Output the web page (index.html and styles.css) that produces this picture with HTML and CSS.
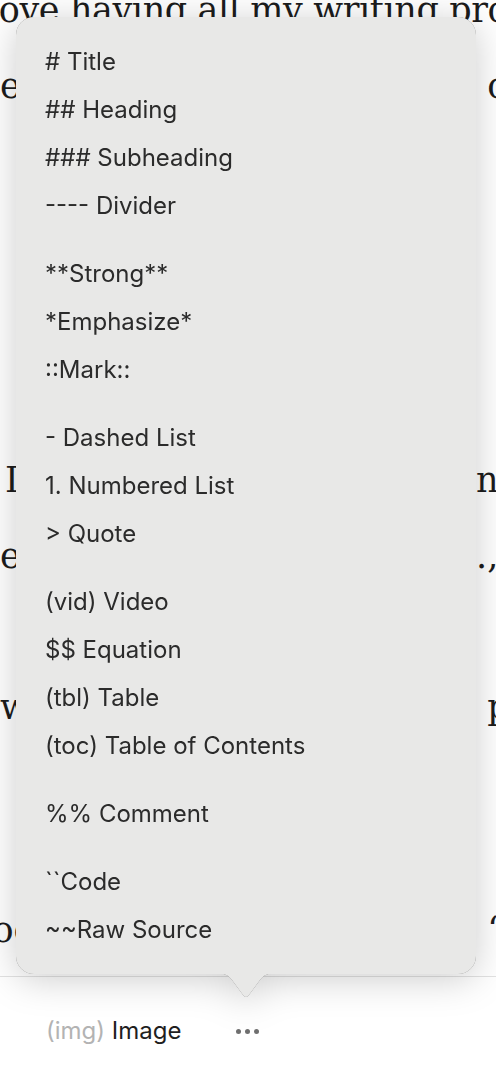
FILE: index.html
```html
<!DOCTYPE html>
<html lang="en">
<head>
<meta charset="utf-8">
<title>Insert menu</title>
<link rel="stylesheet" href="styles.css">
</head>
<body>
<div class="screen">
  <main class="article">
    <div class="lines">
      <div class="ln"><span class="frag frag-first">love having all my writing projects</span></div>
      <div class="ln"><span class="frag">e</span><span class="frag-r">&nbsp;co</span></div>
      <div class="ln gap-lg"><span class="frag frag-i">I</span><span class="frag-r">ne</span></div>
      <div class="ln"><span class="frag">e</span><span class="frag-r">.,</span></div>
      <div class="ln gap-sm"><span class="frag">w</span><span class="frag-r">&nbsp;p</span></div>
      <div class="ln gap-md"><span class="frag frag-cut">boc</span><span class="frag-r">&nbsp;‘</span></div>
    </div>
  </main>

  <footer class="toolbar">
    <span class="tb-item"><span class="tb-code">(img)</span> Image</span>
    <span class="more" aria-label="More"><i></i><i></i><i></i></span>
  </footer>

  <div class="popover">
    <div class="menu">
      <div class="group">
        <div class="item"># Title</div>
        <div class="item">## Heading</div>
        <div class="item">### Subheading</div>
        <div class="item">---- Divider</div>
      </div>
      <div class="group">
        <div class="item">**Strong**</div>
        <div class="item">*Emphasize*</div>
        <div class="item">::Mark::</div>
      </div>
      <div class="group">
        <div class="item">- Dashed List</div>
        <div class="item">1. Numbered List</div>
        <div class="item">&gt; Quote</div>
      </div>
      <div class="group">
        <div class="item">(vid) Video</div>
        <div class="item">$$ Equation</div>
        <div class="item">(tbl) Table</div>
        <div class="item">(toc) Table of Contents</div>
      </div>
      <div class="group">
        <div class="item">%% Comment</div>
      </div>
      <div class="group">
        <div class="item">``Code</div>
        <div class="item">~~Raw Source</div>
      </div>
    </div>
    <svg class="arrow" width="60" height="26" viewBox="0 0 60 26" aria-hidden="true">
      <path d="M0 0 C8 0 12 2 16 7 L27 22 Q30 26 33 22 L44 7 C48 2 52 0 60 0 Z" fill="#e8e8e7"/>
    </svg>
  </div>
</div>
</body>
</html>
```

FILE: styles.css
```css
* { box-sizing: border-box; }

html, body {
  margin: 0;
  padding: 0;
  background: #ffffff;
}

.screen {
  position: relative;
  width: 496px;
  height: 1070px;
  overflow: hidden;
  background: #ffffff;
}

/* background document */
.article {
  height: 977px;
  overflow: hidden;
  border-bottom: 1px solid #e2e2e2;
}

.lines {
  margin-top: -28px;
  font-family: "DejaVu Serif", serif;
  font-size: 35px;
  line-height: 76px;
  color: #1c1c1c;
}

.ln {
  display: flex;
  height: 76px;
  white-space: nowrap;
  overflow: hidden;
}

.frag { flex: none; }
.frag-first { margin-left: -12px; letter-spacing: -0.4px; word-spacing: 0; }
.frag-cut { margin-left: -30px; }
.frag-i { margin-left: 5px; }

.frag-r {
  flex: none;
  margin-left: auto;
  width: 20px;
  overflow: visible;
}

.gap-lg { margin-top: 318px; }
.gap-sm { margin-top: 75px; }
.gap-md { margin-top: 147px; }

/* bottom toolbar */
.toolbar {
  display: flex;
  align-items: center;
  gap: 55px;
  height: 93px;
  padding: 13px 0 0 46px;
  font-family: Inter, "Noto Sans", sans-serif;
  font-size: 24px;
  color: #1f1f1f;
}

.tb-code { color: #b3b3b3; }

.more {
  display: flex;
  gap: 4px;
  padding-top: 2px;
}

.more i {
  display: block;
  width: 5px;
  height: 5px;
  border-radius: 50%;
  background: #6f6f6f;
}

/* popover menu */
.popover {
  position: absolute;
  left: 16px;
  top: 17px;
  width: 460px;
  filter: drop-shadow(0 0 0.7px rgba(0, 0, 0, 0.5)) drop-shadow(0 5px 18px rgba(0, 0, 0, 0.2));
}

.menu {
  display: flex;
  flex-direction: column;
  gap: 20px;
  padding: 21px 0 20px 29px;
  background: #e8e8e7;
  border-radius: 18px;
  font-family: Inter, "Noto Sans", sans-serif;
  font-size: 24px;
  color: #2b2b2b;
}

.group {
  display: flex;
  flex-direction: column;
}

.item {
  height: 48px;
  line-height: 48px;
  white-space: nowrap;
}

.arrow {
  position: absolute;
  left: 200px;
  top: calc(100% - 1px);
  display: block;
}
```
